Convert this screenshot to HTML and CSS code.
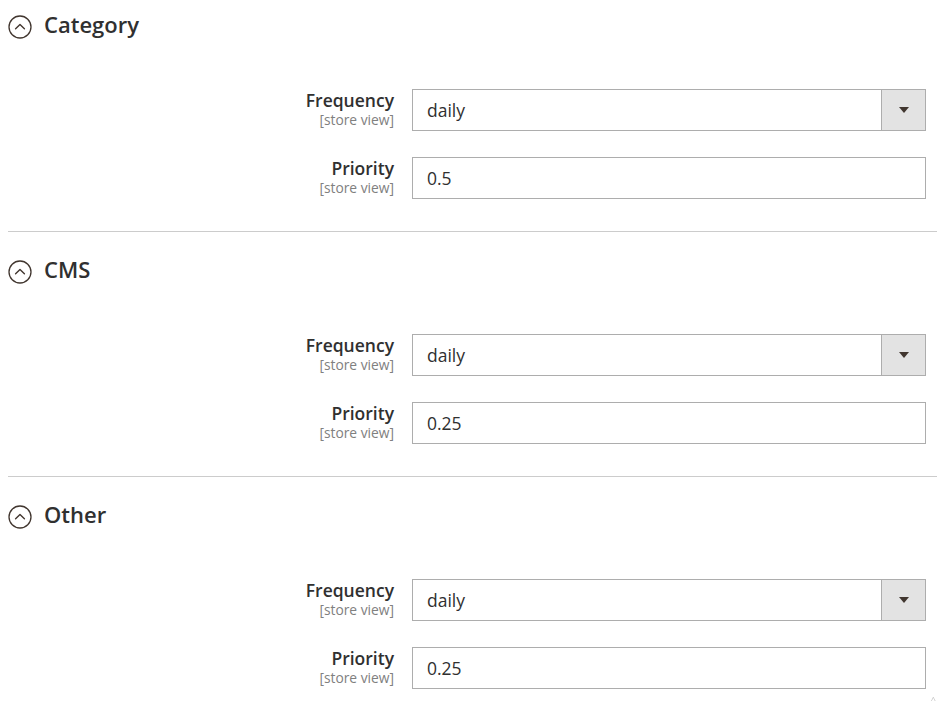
FILE: index.html
```html
<!DOCTYPE html>
<html lang="en">
<head>
<meta charset="utf-8">
<title>Sitemap config</title>
<link rel="stylesheet" href="styles.css">
</head>
<body>
<div class="page">
  <section class="section">
    <div class="section-title">
      <svg class="toggle" viewBox="0 0 24 24" width="24" height="24"><circle cx="12" cy="12" r="11" fill="none" stroke="#41362f" stroke-width="1.3"/><path d="M7.6 13.8 L12 9.6 L16.4 13.8" fill="none" stroke="#41362f" stroke-width="1.4" stroke-linecap="round" stroke-linejoin="round"/></svg>
      <span>Category</span>
    </div>
    <div class="fields">
      <div class="row">
        <div class="label"><span class="name">Frequency</span><span class="scope">[store view]</span></div>
        <div class="select"><span class="value">daily</span><span class="arrow"><i></i></span></div>
      </div>
      <div class="row">
        <div class="label"><span class="name">Priority</span><span class="scope">[store view]</span></div>
        <div class="input"><span class="value">0.5</span></div>
      </div>
    </div>
  </section>
  <section class="section">
    <div class="section-title">
      <svg class="toggle" viewBox="0 0 24 24" width="24" height="24"><circle cx="12" cy="12" r="11" fill="none" stroke="#41362f" stroke-width="1.3"/><path d="M7.6 13.8 L12 9.6 L16.4 13.8" fill="none" stroke="#41362f" stroke-width="1.4" stroke-linecap="round" stroke-linejoin="round"/></svg>
      <span>CMS</span>
    </div>
    <div class="fields">
      <div class="row">
        <div class="label"><span class="name">Frequency</span><span class="scope">[store view]</span></div>
        <div class="select"><span class="value">daily</span><span class="arrow"><i></i></span></div>
      </div>
      <div class="row">
        <div class="label"><span class="name">Priority</span><span class="scope">[store view]</span></div>
        <div class="input"><span class="value">0.25</span></div>
      </div>
    </div>
  </section>
  <section class="section last">
    <div class="section-title">
      <svg class="toggle" viewBox="0 0 24 24" width="24" height="24"><circle cx="12" cy="12" r="11" fill="none" stroke="#41362f" stroke-width="1.3"/><path d="M7.6 13.8 L12 9.6 L16.4 13.8" fill="none" stroke="#41362f" stroke-width="1.4" stroke-linecap="round" stroke-linejoin="round"/></svg>
      <span>Other</span>
    </div>
    <div class="fields">
      <div class="row">
        <div class="label"><span class="name">Frequency</span><span class="scope">[store view]</span></div>
        <div class="select"><span class="value">daily</span><span class="arrow"><i></i></span></div>
      </div>
      <div class="row">
        <div class="label"><span class="name">Priority</span><span class="scope">[store view]</span></div>
        <div class="input"><span class="value">0.25</span></div>
      </div>
    </div>
  </section>
</div>
<span class="to-top">^</span>
</body>
</html>
```
FILE: styles.css
```css
html, body {
  margin: 0;
  padding: 0;
  background: #fff;
}
body {
  font-family: "Open Sans", "Liberation Sans", sans-serif;
  color: #303030;
  overflow: hidden;
}
.page {
  padding-left: 8px;
}
.section {
  border-bottom: 1px solid #cccccc;
  padding-bottom: 32px;
}
.section + .section {
  padding-top: 13px;
}
.section.last {
  border-bottom: none;
}
.section-title {
  height: 56px;
  display: flex;
  align-items: center;
  gap: 12px;
  font-size: 22px;
  font-weight: 600;
  color: #303030;
}
.section-title span {
  position: relative;
  top: -4px;
}
.toggle {
  width: 24px;
  height: 24px;
  flex: none;
  position: relative;
  top: -1px;
}
.fields {
  margin-top: 33px;
  padding-right: 11px;
  display: flex;
  flex-direction: column;
  gap: 26px;
}
.row {
  display: grid;
  grid-template-columns: 386px 1fr;
  column-gap: 18px;
}
.label {
  display: flex;
  flex-direction: column;
  align-items: flex-end;
  padding-top: 1px;
}
.name {
  font-size: 17.5px;
  font-weight: 600;
  line-height: 21px;
}
.scope {
  font-size: 13.8px;
  line-height: 17px;
  color: #808080;
}
.select, .input {
  height: 42px;
  box-sizing: border-box;
  border: 1px solid #adadad;
  display: flex;
  align-items: center;
  background: #fff;
}
.value {
  flex: 1;
  padding-left: 14px;
  font-size: 17.5px;
  color: #303030;
}
.arrow {
  width: 43px;
  align-self: stretch;
  background: #e3e3e3;
  border-left: 1px solid #adadad;
  display: flex;
  align-items: center;
  justify-content: center;
}
.arrow i {
  width: 0;
  height: 0;
  border-left: 5px solid transparent;
  border-right: 5px solid transparent;
  border-top: 6px solid #41362f;
}
.to-top {
  position: fixed;
  right: 1px;
  bottom: 1px;
  font-size: 9px;
  line-height: 10px;
  color: #c0c0c0;
}
```
